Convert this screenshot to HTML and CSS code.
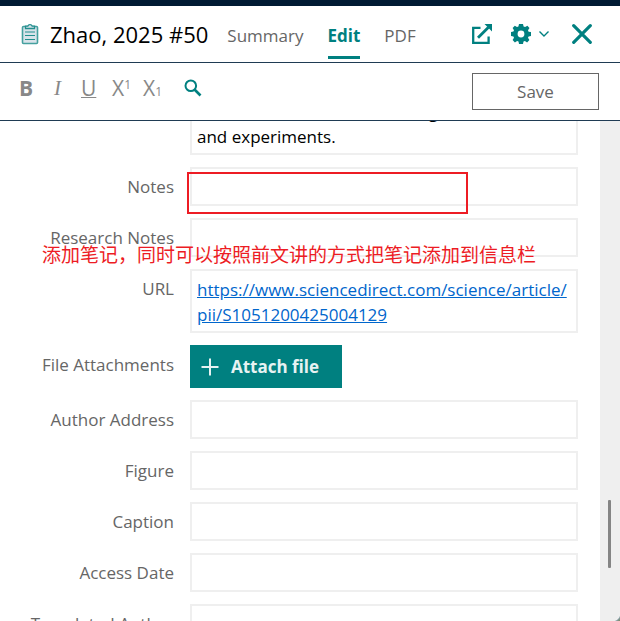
FILE: index.html
```html
<!DOCTYPE html>
<html lang="en">
<head>
<meta charset="utf-8">
<meta name="viewport" content="width=device-width, initial-scale=1">
<title>Zhao, 2025 #50</title>
<link rel="stylesheet" href="styles.css">
</head>
<body>
<div class="panel">
  <header class="header">
    <svg class="doc-icon" viewBox="0 0 18 22" width="18" height="22" aria-hidden="true">
      <rect x="1.5" y="3.5" width="15" height="17" rx="1" fill="#d9e3ea" stroke="#45a09f" stroke-width="1.6"/>
      <path d="M4.5 5.5V3.2H6.8a2.3 2.3 0 0 1 4.4 0h2.3v2.3z" fill="#d9e3ea" stroke="#238f8e" stroke-width="1.3"/>
      <path d="M4 9h10M4 12.5h10M4 16.5h10" stroke="#238f8e" stroke-width="1.2"/>
    </svg>
    <h1 class="title">Zhao, 2025 #50</h1>
    <nav class="tabs">
      <a class="tab" href="#summary">Summary</a>
      <a class="tab active" href="#edit" aria-current="page">Edit</a>
      <a class="tab" href="#pdf">PDF</a>
    </nav>
    <div class="actions">
      <button class="icon-button" type="button" aria-label="Open in new window">
        <svg viewBox="0 0 20 20" width="20" height="20" fill="none" stroke="#008080">
          <path d="M8.500 3.800H1.200V18.800H16.600V12.500" stroke-width="2.300"/>
          <path d="M6 13.700L16.500 3.200" stroke-width="2.800"/>
          <path d="M12.500 0H20V7.500z" fill="#008080" stroke="none"/>
        </svg>
      </button>
      <button class="icon-button settings" type="button" aria-label="Settings">
        <svg viewBox="0 0 20 20" width="20" height="20">
          <path fill="#008080" fill-rule="evenodd" d="M8 0h4l.6 2.500 1.500.6 2.300-1.300 2.100 2.200-1.500 2.300.6 1.400L20 8v4l-2.400.5-.6 1.300 1.400 2.300-2.300 2.300-2.200-1.400-1.400.6L12 20H8l-.5-2.400-1.400-.6-2.200 1.400-2.300-2.300L3 13.800l-.6-1.300L0 12V8l2.400-.5L3 6.200 1.600 4l2.200-2.200 2.200 1.300 1.400-.6zM10 6.600a3.400 3.400 0 1 0 0 6.800a3.400 3.400 0 0 0 0-6.800z"/>
        </svg>
        <svg viewBox="0 0 10 6" width="10" height="6" fill="none" stroke="#008080" stroke-width="1.4">
          <path d="M.5 .5L5 5L9.500 .5"/>
        </svg>
      </button>
      <button class="icon-button close" type="button" aria-label="Close">
        <svg viewBox="0 0 20 20" width="20" height="20" stroke="#008080" stroke-width="3.2" stroke-linecap="round">
          <path d="M1.700 1.700L18.300 18.300M18.300 1.700L1.700 18.300"/>
        </svg>
      </button>
    </div>
  </header>

  <div class="toolbar">
    <div class="formats">
      <button class="format bold" type="button" aria-label="Bold">B</button>
      <button class="format italic" type="button" aria-label="Italic">I</button>
      <button class="format underline" type="button" aria-label="Underline">U</button>
      <button class="format" type="button" aria-label="Superscript">X<span class="raised">1</span></button>
      <button class="format" type="button" aria-label="Subscript">X<span class="lowered">1</span></button>
    </div>
    <button class="icon-button search" type="button" aria-label="Search">
      <svg viewBox="0 0 18 18" width="18" height="18" fill="none" stroke="#008080">
        <circle cx="6.800" cy="6.800" r="5.300" stroke-width="2"/>
        <path d="M10.500 10.500L16.500 16.500" stroke-width="2.600"/>
      </svg>
    </button>
    <button class="save" type="button">Save</button>
  </div>

  <div class="body">
    <form class="form">
      <div class="row">
        <span class="label"></span>
        <textarea class="field abstract" rows="2" aria-label="Abstract">as seen in numerical modeling
and experiments.</textarea>
      </div>
      <div class="row">
        <label class="label" for="notes">Notes</label>
        <div class="cell">
          <input class="field" id="notes" type="text">
          <div class="marker"></div>
        </div>
      </div>
      <div class="row">
        <label class="label" for="research">Research Notes</label>
        <input class="field" id="research" type="text">
        <p class="annotation" lang="zh-CN">添加笔记，同时可以按照前文讲的方式把笔记添加到信息栏</p>
      </div>
      <div class="row">
        <span class="label">URL</span>
        <div class="field url"><a href="https://www.sciencedirect.com/science/article/pii/S1051200425004129">https://www.sciencedirect.com/science/article/<wbr>pii/S1051200425004129</a></div>
      </div>
      <div class="row">
        <span class="label">File Attachments</span>
        <button class="attach" type="button">
          <svg viewBox="0 0 18 18" width="18" height="18" stroke="#e6f2f2" stroke-width="2" aria-hidden="true"><path d="M9 .5V17.500M.5 9H17.500"/></svg>
          Attach file
        </button>
      </div>
      <div class="row">
        <label class="label" for="address">Author Address</label>
        <input class="field" id="address" type="text">
      </div>
      <div class="row">
        <label class="label" for="figure">Figure</label>
        <input class="field" id="figure" type="text">
      </div>
      <div class="row">
        <label class="label" for="caption">Caption</label>
        <input class="field" id="caption" type="text">
      </div>
      <div class="row">
        <label class="label" for="access">Access Date</label>
        <input class="field" id="access" type="text">
      </div>
      <div class="row">
        <label class="label" for="translated">Translated Author</label>
        <input class="field" id="translated" type="text">
      </div>
    </form>
    <div class="scrollbar"><div class="thumb"></div></div>
  </div>
</div>
</body>
</html>
```
FILE: styles.css
```css
* {
  box-sizing: border-box;
}

body {
  margin: 0;
  font-family: "Open Sans", "Noto Sans CJK SC", sans-serif;
  font-size: 17px;
  color: #666;
  background: #fff;
}

button,
input,
textarea {
  font: inherit;
  color: inherit;
  margin: 0;
}

.panel {
  position: relative;
  display: flex;
  flex-direction: column;
  height: 100vh;
  overflow: hidden;
  border-top: 6px solid #001a33;
}

.header {
  display: flex;
  align-items: center;
  flex: none;
  height: 57px;
  padding: 0 28px 0 21px;
  border-bottom: 1px solid #1f3b54;
}

.doc-icon {
  flex: none;
  margin-right: 11px;
}

.title {
  margin: 0 19px 0 0;
  font-size: 22px;
  font-weight: 400;
  color: #000;
  white-space: nowrap;
}

.tabs {
  display: flex;
  align-self: stretch;
  gap: 24px;
}

.tab {
  display: flex;
  align-items: center;
  height: 53px;
  padding-top: 8px;
  border-bottom: 3px solid transparent;
  color: #666;
  text-decoration: none;
}

.tab.active {
  color: #008080;
  font-weight: 700;
  border-color: #008080;
}

.actions {
  display: flex;
  align-items: center;
  margin-left: auto;
}

.icon-button {
  display: flex;
  align-items: center;
  padding: 0;
  border: 0;
  background: none;
}

.settings {
  gap: 8px;
  margin: 0 23px 0 19px;
}

.toolbar {
  display: flex;
  align-items: flex-start;
  flex: none;
  height: 58px;
  padding: 10px 21px 0 19px;
  border-bottom: 1px solid #1f3b54;
}

.formats {
  display: flex;
}

.format {
  width: 31px;
  padding: 0;
  border: 0;
  background: none;
  color: #888;
  font-size: 21px;
  line-height: 30px;
  text-align: left;
  white-space: nowrap;
}

.bold {
  font-weight: 700;
}

.italic {
  padding-left: 4px;
  font-family: "Liberation Serif", serif;
  font-style: italic;
}

.underline {
  text-decoration: underline;
  text-decoration-thickness: 1px;
}

.raised,
.lowered {
  font-size: 12px;
  line-height: 1;
}

.raised {
  vertical-align: 7px;
}

.search {
  height: 30px;
  margin-left: 10px;
}

.save {
  width: 127px;
  height: 37px;
  margin-left: auto;
  padding: 0;
  border: 1px solid #666;
  background: #fff;
}

.body {
  display: flex;
  flex: 1;
  min-height: 0;
  overflow: hidden;
}

.form {
  flex: 1;
  display: flex;
  flex-direction: column;
  gap: 12px;
  margin-top: -30px;
  padding-right: 22px;
}

.row {
  position: relative;
  flex: none;
  display: grid;
  grid-template-columns: 174px 1fr;
  column-gap: 16px;
}

.label {
  padding-top: 8px;
  line-height: 24px;
  text-align: right;
  white-space: nowrap;
}

.cell {
  position: relative;
}

.field {
  display: block;
  width: 100%;
  min-height: 39px;
  padding: 6px 5px 4px;
  border: 2px solid #efefef;
  background: #fff;
  line-height: 25px;
  outline: 0;
}

.abstract {
  height: 64px;
  overflow: hidden;
  resize: none;
  color: #000;
}

.url {
  height: 64px;
}

.url a {
  color: #0066cc;
}

.attach {
  display: flex;
  align-items: center;
  justify-self: start;
  gap: 12px;
  width: 152px;
  height: 43px;
  padding: 0 0 0 11px;
  border: 0;
  background: #008080;
  color: #e6f2f2;
  font-weight: 700;
  white-space: nowrap;
}

.marker {
  position: absolute;
  top: 5px;
  left: -3px;
  width: 281px;
  height: 42px;
  border: 2px solid #ed1c24;
}

.annotation {
  position: absolute;
  top: 22px;
  left: 42px;
  margin: 0;
  color: #ed1c24;
  font-family: "Noto Sans CJK SC", sans-serif;
  font-size: 19px;
  line-height: 28px;
  white-space: nowrap;
}

.scrollbar {
  display: flex;
  align-items: flex-end;
  width: 20px;
  padding: 0 0 53px 8px;
  background: #efefef;
}

.thumb {
  width: 3px;
  height: 68px;
  border-radius: 1px;
  background: #858585;
}

.panel::after {
  content: "";
  position: absolute;
  right: 0;
  bottom: 0;
  width: 8px;
  height: 8px;
  background: radial-gradient(circle at 0 0, transparent 8px, #8299a0 9px, #7f8d5d 11px);
}
```
